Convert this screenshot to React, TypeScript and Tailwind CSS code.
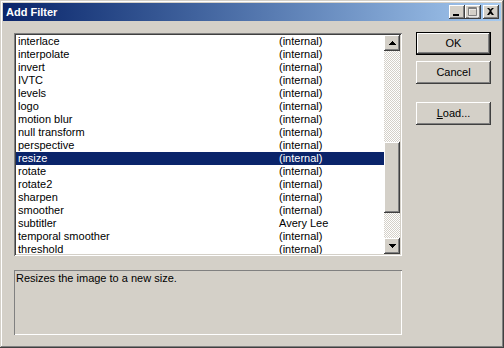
const filters: [string, string][] = [
  ['interlace', '(internal)'],
  ['interpolate', '(internal)'],
  ['invert', '(internal)'],
  ['IVTC', '(internal)'],
  ['levels', '(internal)'],
  ['logo', '(internal)'],
  ['motion blur', '(internal)'],
  ['null transform', '(internal)'],
  ['perspective', '(internal)'],
  ['resize', '(internal)'],
  ['rotate', '(internal)'],
  ['rotate2', '(internal)'],
  ['sharpen', '(internal)'],
  ['smoother', '(internal)'],
  ['subtitler', 'Avery Lee'],
  ['temporal smoother', '(internal)'],
  ['threshold', '(internal)'],
]

const raised =
  'bg-[#d4d0c8] shadow-[inset_-1px_-1px_#404040,inset_1px_1px_#ffffff,inset_-2px_-2px_#808080,inset_2px_2px_#d4d0c8]'

function CaptionButton({ children }: { children: React.ReactNode }) {
  return <div className={`w-[16px] h-[14px] ${raised}`}>{children}</div>
}

function PushButton({ children, isDefault }: { children: React.ReactNode; isDefault?: boolean }) {
  return (
    <div
      className={`w-[75px] h-[23px] flex items-center justify-center ${raised} ${
        isDefault ? 'border border-black' : ''
      }`}
    >
      {children}
    </div>
  )
}

export default function App() {
  return (
    <div className="w-[504px] h-[348px] overflow-hidden bg-[#d4d0c8] p-[3px] flex flex-col font-['Liberation_Sans',Arial,sans-serif] text-[11px] text-black shadow-[inset_-1px_-1px_#404040,inset_1px_1px_#d4d0c8,inset_-2px_-2px_#808080,inset_2px_2px_#ffffff]">
      {/* Title bar */}
      <div className="h-[18px] flex items-center pl-[3px] pr-[2px] bg-linear-to-r from-[#0a246a] to-[#a6caf0]">
        <span className="font-bold text-white text-[11px] leading-none">Add Filter</span>
        <div className="ml-auto flex items-center">
          <CaptionButton>
            <svg width="16" height="14">
              <rect x="4" y="9" width="6" height="2" fill="#000" />
            </svg>
          </CaptionButton>
          <CaptionButton>
            <svg width="16" height="14">
              <g transform="translate(1 1)">
                <path d="M3 2h9v9h-9z M3 3h9" fill="none" stroke="#fff" strokeWidth="1" />
              </g>
              <path d="M3.5 2.5h8v8h-8z M3.5 3.5h8" fill="none" stroke="#808080" strokeWidth="1" />
            </svg>
          </CaptionButton>
          <div className="ml-[2px]">
            <CaptionButton>
              <svg width="16" height="14">
                <path d="M4 3h2l1.5 1.5L9 3h2L8.5 5.5v1L11 10H9L7.5 8.5 6 10H4l2.5-3.5v-1z" fill="#000" />
              </svg>
            </CaptionButton>
          </div>
        </div>
      </div>

      {/* Client area */}
      <div className="flex pl-[11px] pt-[12px]">
        <div className="w-[388px] flex flex-col">
          <div className="h-[223px] bg-white p-[2px] flex shadow-[inset_1px_1px_#808080,inset_-1px_-1px_#ffffff,inset_2px_2px_#404040,inset_-2px_-2px_#d4d0c8]">
            <div className="flex-1 overflow-hidden">
              {filters.map(([name, author]) => {
                const sel = name === 'resize'
                return (
                  <div
                    key={name}
                    className={`h-[13px] leading-[13px] flex ${sel ? 'bg-[#0a246a] text-white' : ''}`}
                  >
                    <span className="w-[263px] pl-[2px] whitespace-nowrap">{name}</span>
                    <span className="whitespace-nowrap">{author}</span>
                  </div>
                )
              })}
            </div>
            <div className="w-[16px] flex flex-col">
              <div className={`h-[16px] flex items-center justify-center ${raised}`}>
                <svg width="7" height="4">
                  <path d="M3 0h1v1h1v1h1v1h1v1h-7v-1h1v-1h1v-1h1z" fill="#000" />
                </svg>
              </div>
              <div className="flex-1 flex flex-col bg-[repeating-conic-gradient(#d4d0c8_0_25%,#ffffff_0_50%)] bg-size-[2px_2px]">
                <div className={`mt-[91px] h-[71px] ${raised}`} />
              </div>
              <div className={`h-[16px] flex items-center justify-center ${raised}`}>
                <svg width="7" height="4">
                  <path d="M0 0h7v1h-1v1h-1v1h-1v1h-1v-1h-1v-1h-1v-1h-1z" fill="#000" />
                </svg>
              </div>
            </div>
          </div>

          <div className="mt-[14px] h-[65px] px-[2px] pt-[2px] leading-[13px] shadow-[inset_1px_1px_#808080,inset_-1px_-1px_#ffffff]">
            Resizes the image to a new size.
          </div>
        </div>

        <div className="ml-[14px] -mt-[1px] flex flex-col">
          <PushButton isDefault>OK</PushButton>
          <div className="mt-[6px]">
            <PushButton>Cancel</PushButton>
          </div>
          <div className="mt-[18px]">
            <PushButton>
              <span>
                <span className="underline">L</span>oad...
              </span>
            </PushButton>
          </div>
        </div>
      </div>
    </div>
  )
}
